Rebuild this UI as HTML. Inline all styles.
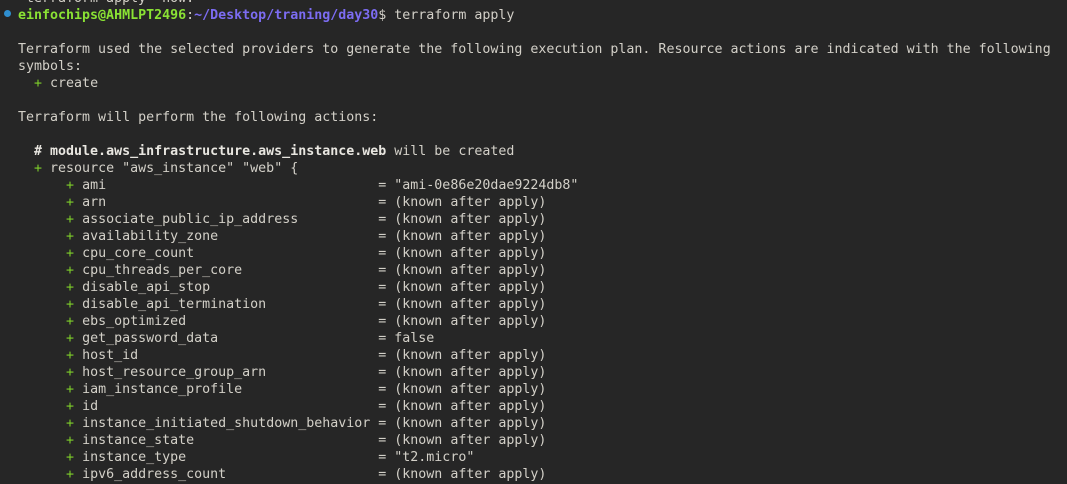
<!DOCTYPE html>
<html><head><meta charset="utf-8"><style>
html,body{margin:0;padding:0;width:1067px;height:484px;overflow:hidden;background:#262626;}
pre{position:absolute;left:18px;top:-10px;margin:0;font-family:"DejaVu Sans Mono","Liberation Mono",monospace;font-size:13.3px;line-height:17px;color:#d3d0c8;white-space:pre;}
.g{color:#7fcf2a;}
.pg{color:#8ae234;font-weight:bold;}
.pb{color:#7c6cf2;font-weight:bold;}
b{font-weight:bold;color:#e8e6e0;}
.dot{position:absolute;left:4px;top:10px;width:7px;height:7px;border-radius:50%;background:#2f8fd0;}
</style></head><body>
<div class="dot"></div>
<pre> terraform apply -now:
<span class="pg">einfochips@AHMLPT2496</span>:<span class="pb">~/Desktop/traning/day30</span>$ terraform apply

Terraform used the selected providers to generate the following execution plan. Resource actions are indicated with the following
symbols:
  <span class="g">+</span> create

Terraform will perform the following actions:

  <b># module.aws_infrastructure.aws_instance.web</b> will be created
  <span class="g">+</span> resource "aws_instance" "web" {
      <span class="g">+</span> ami                                  = "ami-0e86e20dae9224db8"
      <span class="g">+</span> arn                                  = (known after apply)
      <span class="g">+</span> associate_public_ip_address          = (known after apply)
      <span class="g">+</span> availability_zone                    = (known after apply)
      <span class="g">+</span> cpu_core_count                       = (known after apply)
      <span class="g">+</span> cpu_threads_per_core                 = (known after apply)
      <span class="g">+</span> disable_api_stop                     = (known after apply)
      <span class="g">+</span> disable_api_termination              = (known after apply)
      <span class="g">+</span> ebs_optimized                        = (known after apply)
      <span class="g">+</span> get_password_data                    = false
      <span class="g">+</span> host_id                              = (known after apply)
      <span class="g">+</span> host_resource_group_arn              = (known after apply)
      <span class="g">+</span> iam_instance_profile                 = (known after apply)
      <span class="g">+</span> id                                   = (known after apply)
      <span class="g">+</span> instance_initiated_shutdown_behavior = (known after apply)
      <span class="g">+</span> instance_state                       = (known after apply)
      <span class="g">+</span> instance_type                        = "t2.micro"
      <span class="g">+</span> ipv6_address_count                   = (known after apply)
</pre>
</body></html>
